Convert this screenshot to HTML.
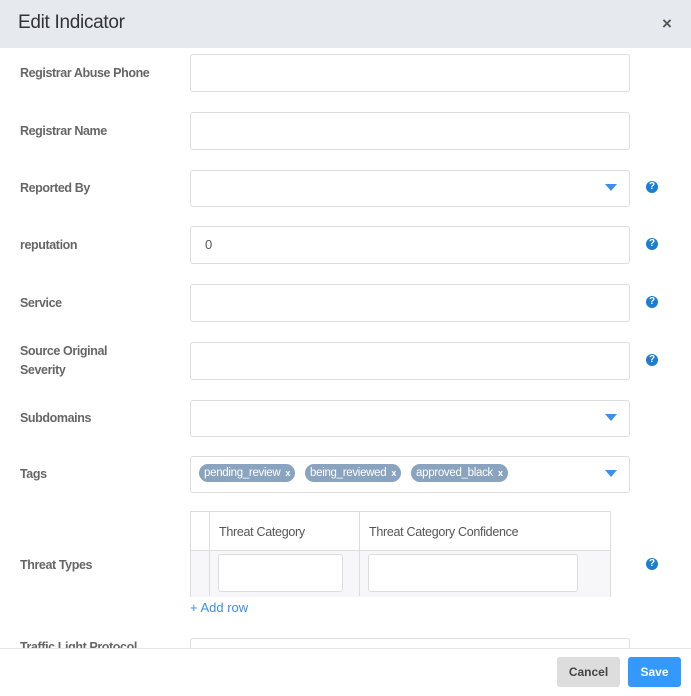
<!DOCTYPE html><html><head><style>
body{margin:0;width:691px;height:695px;overflow:hidden;background:#fff;font-family:"Liberation Sans",sans-serif;position:relative}
.a{position:absolute}
.hd{left:0;top:0;width:691px;height:48px;background:#e6eaee}
.lb{left:20px;font-size:12.5px;color:#666;font-weight:bold;letter-spacing:-.4px;line-height:19px}
.in{left:190px;width:438px;border:1px solid #ddd;border-radius:3px;background:#fff}
.q{left:646px;width:12px;height:12px;border-radius:50%;background:#1a7fd4;color:#fff;font-size:10px;font-weight:bold;text-align:center;line-height:12px}
.tri{width:0;height:0;border-left:6px solid transparent;border-right:6px solid transparent;border-top:7px solid #3d8fe8;left:605px}
.tag{top:464px;height:18px;background:#8aa3bf;color:#fff;font-size:11.5px;letter-spacing:-.3px;line-height:18px;border-radius:9px;padding:0 5px}
.tag b{font-size:9px;margin-left:5px}
</style></head><body>
<div class="a hd"></div>
<div class="a" style="left:18px;top:12px;font-size:19px;color:#333;letter-spacing:-.3px">Edit Indicator</div>
<div class="a" style="left:662px;top:14px;font-size:17px;color:#555;font-weight:bold">×</div>

<div class="a lb" style="top:64px">Registrar Abuse Phone</div><div class="a in" style="top:54px;height:36px"></div>
<div class="a lb" style="top:122px">Registrar Name</div><div class="a in" style="top:112px;height:36px"></div>
<div class="a lb" style="top:179px">Reported By</div><div class="a in" style="top:170px;height:35px"></div><div class="a tri" style="top:184px"></div><div class="a q" style="top:181px">?</div>
<div class="a lb" style="top:236px">reputation</div><div class="a in" style="top:226px;height:36px"></div><div class="a" style="left:205px;top:237px;font-size:13px;color:#555">0</div><div class="a q" style="top:238px">?</div>
<div class="a lb" style="top:294px">Service</div><div class="a in" style="top:284px;height:36px"></div><div class="a q" style="top:296px">?</div>
<div class="a lb" style="top:342px">Source Original<br>Severity</div><div class="a in" style="top:342px;height:36px"></div><div class="a q" style="top:354px">?</div>
<div class="a lb" style="top:409px">Subdomains</div><div class="a in" style="top:400px;height:35px"></div><div class="a tri" style="top:414px"></div>
<div class="a lb" style="top:465px">Tags</div><div class="a in" style="top:456px;height:35px"></div><div class="a tri" style="top:470px"></div>
<div class="a tag" style="left:199px">pending_review<b>x</b></div>
<div class="a tag" style="left:305px">being_reviewed<b>x</b></div>
<div class="a tag" style="left:411px">approved_black<b>x</b></div>

<div class="a lb" style="top:556px">Threat Types</div>
<div class="a" style="left:190px;top:511px;width:419px;height:85px;border:1px solid #ddd;border-bottom:none;background:#f7f7f9"></div>
<div class="a" style="left:191px;top:512px;width:419px;height:38px;background:#fff;border-bottom:1px solid #ddd"></div>
<div class="a" style="left:209px;top:511px;width:1px;height:85px;background:#ddd"></div>
<div class="a" style="left:359px;top:511px;width:1px;height:85px;background:#ddd"></div>
<div class="a" style="left:219px;top:525px;font-size:12.5px;letter-spacing:-.3px;color:#555">Threat Category</div>
<div class="a" style="left:369px;top:525px;font-size:12.5px;letter-spacing:-.3px;color:#555">Threat Category Confidence</div>
<div class="a" style="left:218px;top:554px;width:123px;height:36px;border:1px solid #ddd;border-radius:3px;background:#fff"></div>
<div class="a" style="left:368px;top:554px;width:208px;height:36px;border:1px solid #ddd;border-radius:3px;background:#fff"></div>
<div class="a q" style="top:558px">?</div>
<div class="a" style="left:190px;top:600px;font-size:13px;color:#3d8fe8">+ Add row</div>
<div class="a lb" style="top:638px">Traffic Light Protocol</div><div class="a in" style="top:638px;height:36px"></div>

<div class="a" style="left:0;top:648px;width:691px;height:47px;background:#fff;border-top:1px solid #e5e5e5"></div>
<div class="a" style="left:557px;top:657px;width:63px;height:30px;background:#ddd;border-radius:3px;color:#444;font-size:12px;font-weight:bold;text-align:center;line-height:30px">Cancel</div>
<div class="a" style="left:628px;top:657px;width:53px;height:30px;background:#3399ff;border-radius:3px;color:#fff;font-size:12px;font-weight:bold;text-align:center;line-height:30px">Save</div>
</body></html>
